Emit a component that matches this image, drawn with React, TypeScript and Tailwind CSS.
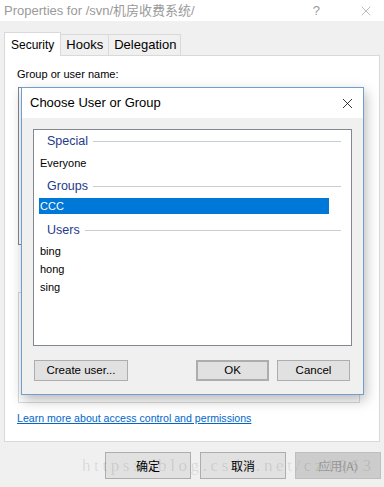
import { X } from "lucide-react";

const USERS = ["bing", "hong", "sing"];

function SectionHeader({ label, h = "h-[22px]" }: { label: string; h?: string }) {
  return (
    <div className={`flex items-center ${h} pl-[13px] pr-[10px] gap-[5px]`}>
      <span className="text-[12.5px] text-[#1e3a8a] leading-none">{label}</span>
      <div className="flex-1 h-px bg-[#c8cdd4]" />
    </div>
  );
}

function WinButton({ children, className = "" }: { children: React.ReactNode; className?: string }) {
  return (
    <button className={`h-[21px] border border-[#adadad] bg-[#e1e1e1] text-[11.5px] text-black leading-none ${className}`}>
      {children}
    </button>
  );
}

function ChooseDialog() {
  return (
    <div className="absolute left-[21px] top-[87px] w-[343px] h-[308px] border border-[#6f9fcf] bg-[#f0f0f0] shadow-[2px_5px_12px_rgba(0,0,0,0.28)] flex flex-col">
      <div className="h-[30px] bg-white flex items-center justify-between pl-[8px] pr-[7px]">
        <span className="text-[13px] text-black">Choose User or Group</span>
        <X size={17} strokeWidth={1.1} className="text-black" />
      </div>
      <div className="px-[11px] pt-[11px]">
        <div className="h-[217px] border border-[#828790] bg-white text-[11px] text-black">
          <SectionHeader label="Special" />
          <div className="h-[22px] flex items-center pl-[6px]">Everyone</div>
          <SectionHeader label="Groups" h="h-[24px]" />
          <div className="ml-[5px] w-[290px] h-[16px] bg-[#0078d7] text-white flex items-center pl-[1px]">CCC</div>
          <div className="mt-[4px]">
            <SectionHeader label="Users" h="h-[24px]" />
          </div>
          {USERS.map((u) => (
            <div key={u} className="h-[18px] flex items-center pl-[6px]">{u}</div>
          ))}
        </div>
        <div className="flex items-center mt-[14px] pl-px">
          <WinButton className="w-[94px]">Create user...</WinButton>
          <div className="flex-1" />
          <WinButton className="w-[73px] border-2 border-[#0078d7]">OK</WinButton>
          <WinButton className="w-[73px] ml-[8px] mr-[2px]">Cancel</WinButton>
        </div>
      </div>
    </div>
  );
}

export default function App() {
  return (
    <div className="relative w-[384px] h-[487px] overflow-hidden bg-[#f0f0f0] font-['Liberation_Sans','Noto_Sans_CJK_SC',sans-serif] text-black">
      {/* title bar */}
      <div className="h-[21px] bg-white flex items-center pl-[4px] pr-[10px] text-[#9a9a9a]">
        <span className="text-[13px] leading-none">Properties for /svn/机房收费系统/</span>
        <div className="flex-1" />
        <span className="text-[13px] mr-[38px]">?</span>
        <X size={16} strokeWidth={1} />
      </div>

      {/* tabs */}
      <div className="flex items-end pl-[4px] mt-[10px] h-[24px]">
        <div className="h-[24px] px-[6px] text-[12px] bg-white border border-[#d9d9d9] border-b-0 flex items-center relative z-10 -mb-px">Security</div>
        <div className="h-[21px] px-[5px] text-[13px] bg-[#f0f0f0] border border-[#d9d9d9] border-l-0 border-b-0 flex items-center">Hooks</div>
        <div className="h-[21px] pl-[5px] pr-[4px] text-[13px] bg-[#f0f0f0] border border-[#d9d9d9] border-l-0 border-b-0 flex items-center">Delegation</div>
      </div>

      {/* tab panel */}
      <div className="mx-[4px] h-[387px] bg-white border border-[#d9d9d9] px-[12px] pt-[13px] text-[11px]">
        <div className="leading-none h-[14px]">Group or user name:</div>
        <div className="mt-[4px] h-[158px] border border-[#828790] ml-px mr-[7px]" />
        <div className="flex justify-end gap-[8px] mt-[7px] mr-[7px]">
          <WinButton className="w-[75px]">Add...</WinButton>
          <WinButton className="w-[75px]">Remove</WinButton>
        </div>
        <div className="mt-[19px] h-[111px] border border-[#dadada] ml-px mr-[7px]" />
        <div className="mt-[10px] text-[10.6px] text-[#0066cc] underline leading-none">Learn more about access control and permissions</div>
      </div>

      {/* bottom buttons */}
      <div className="relative flex justify-end gap-[9px] pr-[3px] mt-[10px] text-[12px] font-['Noto_Sans_CJK_SC',sans-serif]">
        <button className="w-[86px] h-[27px] bg-[#e1e1e1] border border-[#adadad]">确定</button>
        <button className="w-[86px] h-[27px] bg-[#e1e1e1] border border-[#adadad]">取消</button>
        <button className="w-[86px] h-[27px] bg-[#cccccc] border border-[#bfbfbf] text-[#9a9a9a]">应用(A)</button>
      </div>

      {/* watermark */}
      <div className="absolute z-20 left-[82px] top-[457px] text-[17px] leading-none text-black/10 font-['Liberation_Serif',serif] tracking-[3.6px] pointer-events-none">
        https://blog.csdn.net/cz1963
      </div>

      <ChooseDialog />
    </div>
  );
}
